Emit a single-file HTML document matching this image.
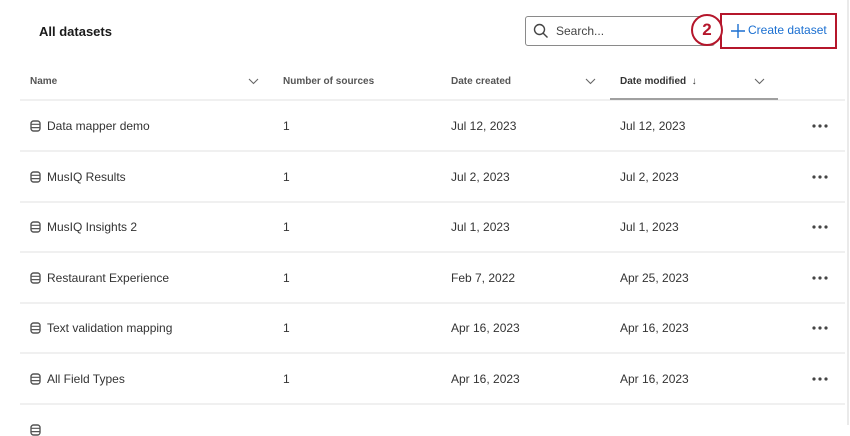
<!DOCTYPE html>
<html><head><style>
*{margin:0;padding:0;box-sizing:border-box}
body{width:850px;height:425px;overflow:hidden;background:#fff;font-family:"Liberation Sans",sans-serif;position:relative;color:#333}
.abs{position:absolute}
.title{left:39px;top:24px;font-size:13px;font-weight:bold;color:#1a1a1a}
.search{left:525px;top:16px;width:190px;height:30px;border:1px solid #8a8a8a;border-radius:3px;background:#fff}
.search span{position:absolute;left:30px;top:7px;font-size:12px;color:#444}
.redbox{left:720px;top:13px;width:117px;height:36px;border:2.5px solid #b5162b}
.circle{left:691px;top:14px;width:32px;height:32px;border:2.5px solid #b5162b;border-radius:50%;background:#fff;text-align:center;font-size:17px;font-weight:bold;line-height:27px;color:#b5162b}
.create{left:748px;top:23px;font-size:12px;color:#1a6fd1}
.hdr{font-size:10px;font-weight:bold;color:#555;top:76px}
.line{height:2px;background:#f0f0f0;left:20px;width:825px}
.cell{font-size:12px;color:#333}
.chev{top:76px}
</style></head><body>
<div class="abs title">All datasets</div>
<div class="abs search"><svg class="abs" style="left:7px;top:6px" width="16" height="16" viewBox="0 0 16 16"><circle cx="6.5" cy="6.5" r="5" fill="none" stroke="#444" stroke-width="1.4"/><line x1="10.2" y1="10.2" x2="14.5" y2="14.5" stroke="#444" stroke-width="1.4"/></svg><span>Search...</span></div>
<div class="abs redbox"></div>
<div class="abs circle">2</div>
<svg class="abs" style="left:731px;top:24px" width="14" height="14" viewBox="0 0 14 14"><path d="M7 0V14M0 7H14" stroke="#1a6fd1" stroke-width="1.4"/></svg>
<div class="abs create">Create dataset</div>

<div class="abs hdr" style="left:30px">Name</div>
<div class="abs hdr" style="left:283px">Number of sources</div>
<div class="abs hdr" style="left:451px">Date created</div>
<div class="abs hdr" style="left:620px;color:#333">Date modified&nbsp; ↓</div>
<svg class="abs chev" style="left:248px;top:78px" width="11" height="7" viewBox="0 0 11 7"><path d="M1 1L5.5 5.5L10 1" fill="none" stroke="#666" stroke-width="1.1"/></svg>
<svg class="abs chev" style="left:585px;top:78px" width="11" height="7" viewBox="0 0 11 7"><path d="M1 1L5.5 5.5L10 1" fill="none" stroke="#666" stroke-width="1.1"/></svg>
<svg class="abs chev" style="left:754px;top:78px" width="11" height="7" viewBox="0 0 11 7"><path d="M1 1L5.5 5.5L10 1" fill="none" stroke="#666" stroke-width="1.1"/></svg>
<div class="abs line" style="top:99px"></div>
<div class="abs" style="left:610px;top:98px;width:168px;height:2px;background:#a0a0a0"></div>
<div class="abs" style="left:847px;top:0;width:2px;height:425px;background:#eaeaea"></div>

<div id="rows"></div>
<script>
var d=[["Data mapper demo","Jul 12, 2023","Jul 12, 2023"],["MusIQ Results","Jul 2, 2023","Jul 2, 2023"],["MusIQ Insights 2","Jul 1, 2023","Jul 1, 2023"],["Restaurant Experience","Feb 7, 2022","Apr 25, 2023"],["Text validation mapping","Apr 16, 2023","Apr 16, 2023"],["All Field Types","Apr 16, 2023","Apr 16, 2023"],["","",""]];
var h="";
d.forEach(function(r,i){var c=126+i*50.6;var t=c-7;
h+='<svg class="abs" style="left:30px;top:'+(c-6)+'px" width="11" height="12" viewBox="0 0 11 12"><rect x="1" y="1" width="9" height="10" rx="2.5" fill="none" stroke="#555" stroke-width="1.4"/><path d="M1 4.3H10M1 7.6H10" stroke="#555" stroke-width="1.2"/></svg>';
if(r[0]){h+='<div class="abs cell" style="left:47px;top:'+t+'px">'+r[0]+'</div><div class="abs cell" style="left:283px;top:'+t+'px">1</div><div class="abs cell" style="left:451px;top:'+t+'px">'+r[1]+'</div><div class="abs cell" style="left:620px;top:'+t+'px">'+r[2]+'</div>';
h+='<svg class="abs" style="left:812px;top:'+(c-2)+'px" width="16" height="4"><circle cx="2" cy="2" r="1.6" fill="#444"/><circle cx="8" cy="2" r="1.6" fill="#444"/><circle cx="14" cy="2" r="1.6" fill="#444"/></svg>';
h+='<div class="abs line" style="top:'+(c+24)+'px"></div>';}
});
document.getElementById("rows").innerHTML=h;
</script>
</body></html>
